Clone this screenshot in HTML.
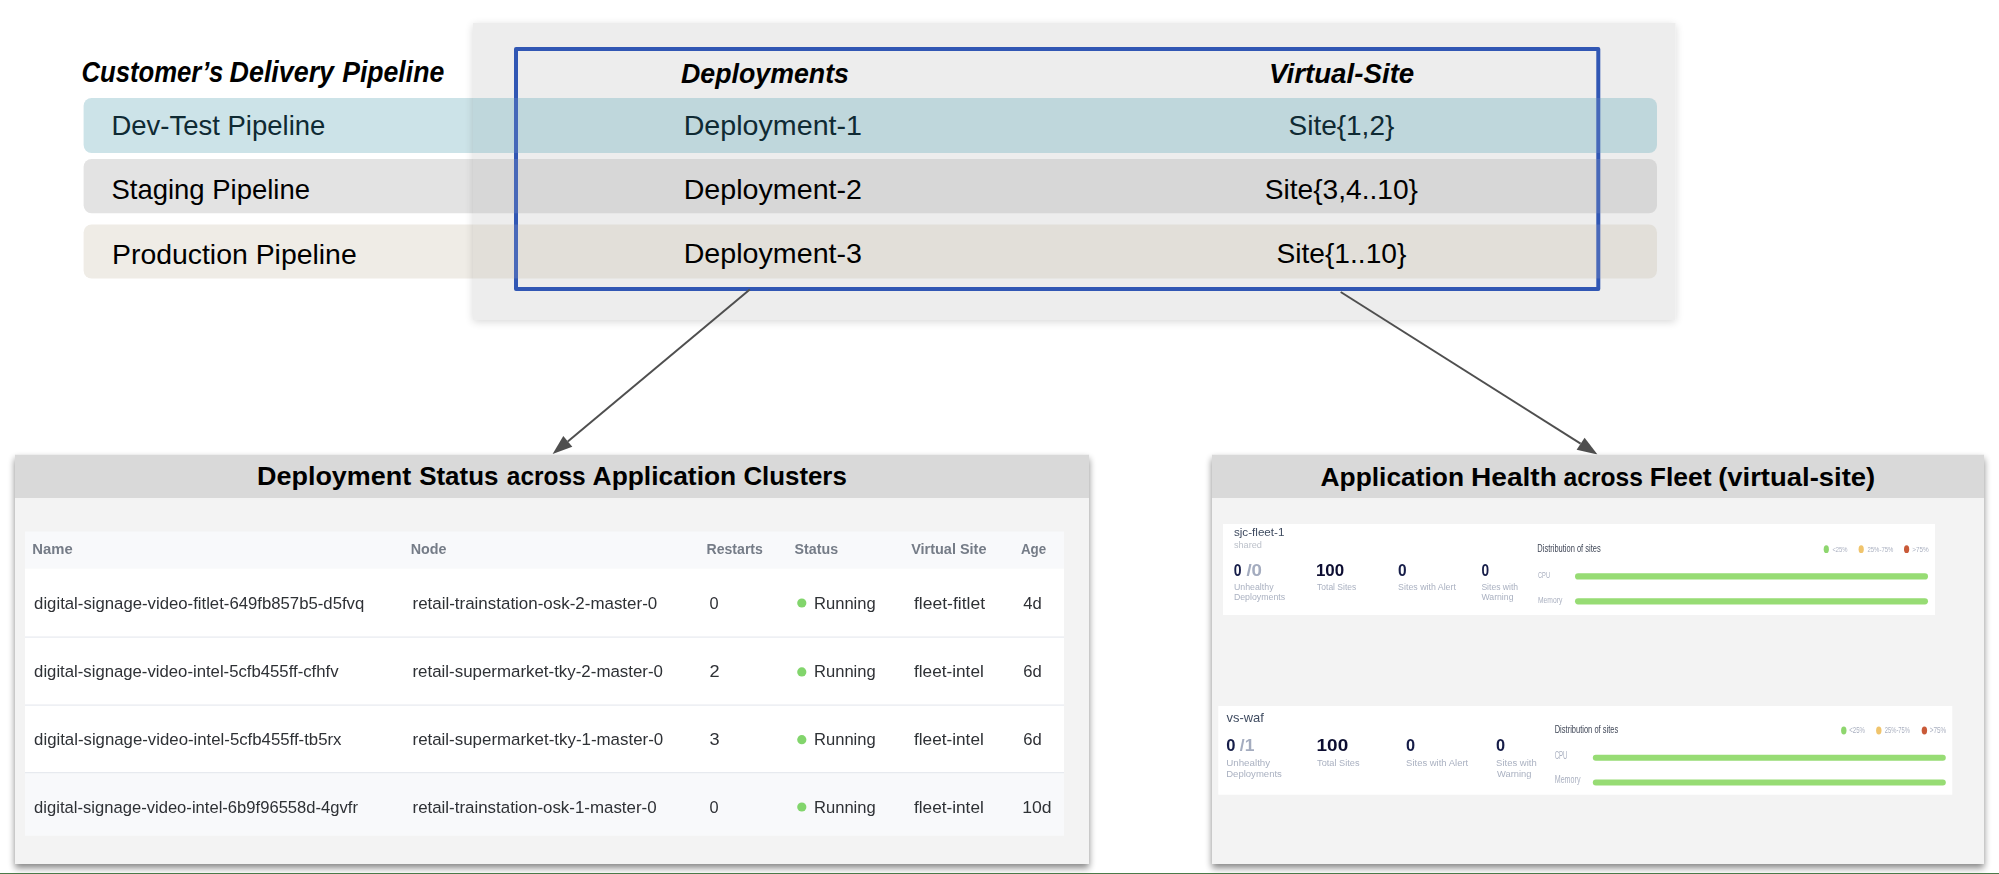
<!DOCTYPE html>
<html><head><meta charset="utf-8"><title>Delivery Pipeline</title>
<style>html,body{margin:0;padding:0;background:#fff;overflow:hidden}svg{display:block}</style></head>
<body><svg width="1999" height="874" viewBox="0 0 1999 874">
<rect width="1999" height="874" fill="#fff"/>
<defs><filter id="sh1" x="-5%" y="-10%" width="110%" height="125%"><feGaussianBlur in="SourceAlpha" stdDeviation="4"/><feOffset dx="0" dy="2"/><feComponentTransfer><feFuncA type="linear" slope="0.16"/></feComponentTransfer><feMerge><feMergeNode/><feMergeNode in="SourceGraphic"/></feMerge></filter><filter id="sh2" x="-5%" y="-5%" width="110%" height="115%"><feGaussianBlur in="SourceAlpha" stdDeviation="3.5"/><feOffset dx="0" dy="3.5"/><feComponentTransfer><feFuncA type="linear" slope="0.48"/></feComponentTransfer><feMerge><feMergeNode/><feMergeNode in="SourceGraphic"/></feMerge></filter><filter id="bl1" x="0" y="0" width="1999" height="874" filterUnits="userSpaceOnUse"><feGaussianBlur stdDeviation="0.3"/></filter><filter id="bl2" x="0" y="0" width="1999" height="874" filterUnits="userSpaceOnUse"><feGaussianBlur stdDeviation="0.5"/></filter></defs>
<rect x="83.6" y="98" width="1573.4" height="55" rx="8" fill="#cce3e8"/>
<rect x="83.6" y="159" width="1573.4" height="54.30000000000001" rx="8" fill="#e3e3e3"/>
<rect x="83.6" y="224.5" width="1573.4" height="54.0" rx="8" fill="#efece6"/>
<rect x="473" y="23" width="1202.5" height="296.8" fill="#ededed" filter="url(#sh1)"/>
<path d="M473 98 H1649 A8 8 0 0 1 1657 106 V145 A8 8 0 0 1 1649 153 H473 Z" fill="#bfd7dc"/>
<path d="M473 159 H1649 A8 8 0 0 1 1657 167 V205.3 A8 8 0 0 1 1649 213.3 H473 Z" fill="#d7d7d7"/>
<path d="M473 224.5 H1649 A8 8 0 0 1 1657 232.5 V270.5 A8 8 0 0 1 1649 278.5 H473 Z" fill="#e2dfd9"/>
<rect x="516" y="49" width="1082.3" height="240" fill="none" stroke="#3157b4" stroke-width="4" stroke-linejoin="round"/>
<rect x="512" y="98" width="8" height="55" fill="#bfd7dc" opacity="0.14"/>
<rect x="1594" y="98" width="8" height="55" fill="#bfd7dc" opacity="0.14"/>
<rect x="512" y="159" width="8" height="54.30000000000001" fill="#d7d7d7" opacity="0.14"/>
<rect x="1594" y="159" width="8" height="54.30000000000001" fill="#d7d7d7" opacity="0.14"/>
<rect x="512" y="224.5" width="8" height="54.0" fill="#e2dfd9" opacity="0.14"/>
<rect x="1594" y="224.5" width="8" height="54.0" fill="#e2dfd9" opacity="0.14"/>
<line x1="749.8" y1="289.5" x2="567.8" y2="441.4" stroke="#4f4f4f" stroke-width="2"/>
<polygon points="552.6,453.9 563.3,436 572.3,446.8" fill="#4f4f4f"/>
<line x1="1340.7" y1="292" x2="1580.6" y2="443.7" stroke="#4f4f4f" stroke-width="2"/>
<polygon points="1597.5,454.5 1576.6,449.7 1584.6,437.7" fill="#4f4f4f"/>
<rect x="15" y="454.7" width="1074" height="409.3" fill="#f3f3f3" filter="url(#sh2)"/>
<rect x="15" y="454.7" width="1074" height="43.3" fill="#d9d9d9"/>
<rect x="25" y="531.5" width="1039" height="37" fill="#f8f9fb"/>
<rect x="25" y="568.5" width="1039" height="204" fill="#ffffff"/>
<rect x="25" y="772.5" width="1039" height="63.2" fill="#f8f9fb"/>
<rect x="25" y="636.5" width="1039" height="1.2" fill="#e7eaef"/>
<rect x="25" y="704.5" width="1039" height="1.2" fill="#e7eaef"/>
<rect x="25" y="772.0" width="1039" height="1.2" fill="#e7eaef"/>
<circle cx="801.8" cy="603.0" r="4.6" fill="#82d56c"/>
<circle cx="801.8" cy="671.9" r="4.6" fill="#82d56c"/>
<circle cx="801.8" cy="739.7" r="4.6" fill="#82d56c"/>
<circle cx="801.8" cy="807.0" r="4.6" fill="#82d56c"/>
<rect x="1212" y="454.7" width="772" height="409.3" fill="#f3f3f3" filter="url(#sh2)"/>
<rect x="1212" y="454.7" width="772" height="43.3" fill="#d9d9d9"/>
<rect x="1223" y="524" width="712" height="91" fill="#ffffff"/>
<rect x="1575" y="573.3" width="353" height="6.2" rx="3.1" fill="#97dc74"/>
<rect x="1575" y="598.2" width="353" height="6.2" rx="3.1" fill="#97dc74"/>
<ellipse cx="1826.3" cy="549.2" rx="2.6" ry="3.9" fill="#8ed66e"/>
<ellipse cx="1861.2" cy="549.2" rx="2.6" ry="3.9" fill="#f0c46c"/>
<ellipse cx="1906.6" cy="549.2" rx="2.6" ry="3.9" fill="#c95a38"/>
<rect x="1218.3" y="706" width="734" height="88.7" fill="#ffffff"/>
<rect x="1592.8" y="754.7" width="353" height="6" rx="3" fill="#97dc74"/>
<rect x="1592.8" y="779.6" width="353" height="6" rx="3" fill="#97dc74"/>
<ellipse cx="1843.8" cy="730.4" rx="2.7" ry="4" fill="#8ed66e"/>
<ellipse cx="1878.8" cy="730.4" rx="2.7" ry="4" fill="#f0c46c"/>
<ellipse cx="1924.4" cy="730.4" rx="2.7" ry="4" fill="#c95a38"/>
<rect x="0" y="873" width="1999" height="1" fill="#4b7a49"/>
<text id="title0" x="81.40" y="82.2" textLength="141.80" lengthAdjust="spacingAndGlyphs" style="font-family:'Liberation Sans',sans-serif;font-size:29px;font-weight:bold;font-style:italic" fill="#000">Customer’s</text>
<text id="title1" x="229.60" y="82.2" textLength="104.40" lengthAdjust="spacingAndGlyphs" style="font-family:'Liberation Sans',sans-serif;font-size:29px;font-weight:bold;font-style:italic" fill="#000">Delivery</text>
<text id="title2" x="342.20" y="82.2" textLength="102.00" lengthAdjust="spacingAndGlyphs" style="font-family:'Liberation Sans',sans-serif;font-size:29px;font-weight:bold;font-style:italic" fill="#000">Pipeline</text>
<text id="hdep" x="681.00" y="82.9" textLength="168.00" lengthAdjust="spacingAndGlyphs" style="font-family:'Liberation Sans',sans-serif;font-size:28px;font-weight:bold;font-style:italic" fill="#000">Deployments</text>
<text id="hvs" x="1269.00" y="82.9" textLength="145.30" lengthAdjust="spacingAndGlyphs" style="font-family:'Liberation Sans',sans-serif;font-size:28px;font-weight:bold;font-style:italic" fill="#000">Virtual-Site</text>
<text id="p1" x="111.50" y="134.6" textLength="213.80" lengthAdjust="spacingAndGlyphs" style="font-family:'Liberation Sans',sans-serif;font-size:28.3px;font-weight:normal;font-style:normal" fill="#0f2a33">Dev-Test Pipeline</text>
<text id="p2" x="111.50" y="199.4" textLength="198.50" lengthAdjust="spacingAndGlyphs" style="font-family:'Liberation Sans',sans-serif;font-size:28.3px;font-weight:normal;font-style:normal" fill="#000">Staging Pipeline</text>
<text id="p3" x="112.00" y="263.6" textLength="244.70" lengthAdjust="spacingAndGlyphs" style="font-family:'Liberation Sans',sans-serif;font-size:28.3px;font-weight:normal;font-style:normal" fill="#000">Production Pipeline</text>
<text id="d1" x="683.70" y="134.7" textLength="178.30" lengthAdjust="spacingAndGlyphs" style="font-family:'Liberation Sans',sans-serif;font-size:28.3px;font-weight:normal;font-style:normal" fill="#0f2a33">Deployment-1</text>
<text id="d2" x="683.70" y="198.7" textLength="178.30" lengthAdjust="spacingAndGlyphs" style="font-family:'Liberation Sans',sans-serif;font-size:28.3px;font-weight:normal;font-style:normal" fill="#000">Deployment-2</text>
<text id="d3" x="683.70" y="263" textLength="178.30" lengthAdjust="spacingAndGlyphs" style="font-family:'Liberation Sans',sans-serif;font-size:28.3px;font-weight:normal;font-style:normal" fill="#000">Deployment-3</text>
<text id="s1" x="1288.50" y="134.7" textLength="105.80" lengthAdjust="spacingAndGlyphs" style="font-family:'Liberation Sans',sans-serif;font-size:28.3px;font-weight:normal;font-style:normal" fill="#0f2a33">Site{1,2}</text>
<text id="s2" x="1264.70" y="198.7" textLength="153.30" lengthAdjust="spacingAndGlyphs" style="font-family:'Liberation Sans',sans-serif;font-size:28.3px;font-weight:normal;font-style:normal" fill="#000">Site{3,4..10}</text>
<text id="s3" x="1276.40" y="263" textLength="130.00" lengthAdjust="spacingAndGlyphs" style="font-family:'Liberation Sans',sans-serif;font-size:28.3px;font-weight:normal;font-style:normal" fill="#000">Site{1..10}</text>
<text id="lt0" x="257.00" y="485.3" textLength="154.20" lengthAdjust="spacingAndGlyphs" style="font-family:'Liberation Sans',sans-serif;font-size:25.5px;font-weight:bold;font-style:normal" fill="#000">Deployment</text>
<text id="lt1" x="419.20" y="485.3" textLength="79.20" lengthAdjust="spacingAndGlyphs" style="font-family:'Liberation Sans',sans-serif;font-size:25.5px;font-weight:bold;font-style:normal" fill="#000">Status</text>
<text id="lt2" x="506.80" y="485.3" textLength="78.80" lengthAdjust="spacingAndGlyphs" style="font-family:'Liberation Sans',sans-serif;font-size:25.5px;font-weight:bold;font-style:normal" fill="#000">across</text>
<text id="lt3" x="592.60" y="485.3" textLength="143.60" lengthAdjust="spacingAndGlyphs" style="font-family:'Liberation Sans',sans-serif;font-size:25.5px;font-weight:bold;font-style:normal" fill="#000">Application</text>
<text id="lt4" x="743.40" y="485.3" textLength="103.40" lengthAdjust="spacingAndGlyphs" style="font-family:'Liberation Sans',sans-serif;font-size:25.5px;font-weight:bold;font-style:normal" fill="#000">Clusters</text>
<text id="rt0" x="1320.60" y="486.3" textLength="143.40" lengthAdjust="spacingAndGlyphs" style="font-family:'Liberation Sans',sans-serif;font-size:25.5px;font-weight:bold;font-style:normal" fill="#000">Application</text>
<text id="rt1" x="1471.00" y="486.3" textLength="85.80" lengthAdjust="spacingAndGlyphs" style="font-family:'Liberation Sans',sans-serif;font-size:25.5px;font-weight:bold;font-style:normal" fill="#000">Health</text>
<text id="rt2" x="1563.60" y="486.3" textLength="79.20" lengthAdjust="spacingAndGlyphs" style="font-family:'Liberation Sans',sans-serif;font-size:25.5px;font-weight:bold;font-style:normal" fill="#000">across</text>
<text id="rt3" x="1649.80" y="486.3" textLength="61.80" lengthAdjust="spacingAndGlyphs" style="font-family:'Liberation Sans',sans-serif;font-size:25.5px;font-weight:bold;font-style:normal" fill="#000">Fleet</text>
<text id="rt4" x="1718.20" y="486.3" textLength="157.00" lengthAdjust="spacingAndGlyphs" style="font-family:'Liberation Sans',sans-serif;font-size:25.5px;font-weight:bold;font-style:normal" fill="#000">(virtual-site)</text>
<g filter="url(#bl1)"><text id="h_name" x="32.35" y="554.1" textLength="40.35" lengthAdjust="spacingAndGlyphs" style="font-family:'Liberation Sans',sans-serif;font-size:14.2px;font-weight:bold;font-style:normal" fill="#757c87">Name</text>
<text id="h_node" x="410.70" y="554.1" textLength="35.80" lengthAdjust="spacingAndGlyphs" style="font-family:'Liberation Sans',sans-serif;font-size:14.2px;font-weight:bold;font-style:normal" fill="#757c87">Node</text>
<text id="h_rest" x="706.50" y="554.1" textLength="56.40" lengthAdjust="spacingAndGlyphs" style="font-family:'Liberation Sans',sans-serif;font-size:14.2px;font-weight:bold;font-style:normal" fill="#757c87">Restarts</text>
<text id="h_stat" x="794.60" y="554.1" textLength="43.50" lengthAdjust="spacingAndGlyphs" style="font-family:'Liberation Sans',sans-serif;font-size:14.2px;font-weight:bold;font-style:normal" fill="#757c87">Status</text>
<text id="h_vs" x="911.20" y="554.1" textLength="75.30" lengthAdjust="spacingAndGlyphs" style="font-family:'Liberation Sans',sans-serif;font-size:14.2px;font-weight:bold;font-style:normal" fill="#757c87">Virtual Site</text>
<text id="h_age" x="1020.90" y="554.1" textLength="25.30" lengthAdjust="spacingAndGlyphs" style="font-family:'Liberation Sans',sans-serif;font-size:14.2px;font-weight:bold;font-style:normal" fill="#757c87">Age</text>
<text id="r0_name" x="34.10" y="608.5" textLength="330.20" lengthAdjust="spacingAndGlyphs" style="font-family:'Liberation Sans',sans-serif;font-size:16.3px;font-weight:normal;font-style:normal" fill="#2e3035">digital-signage-video-fitlet-649fb857b5-d5fvq</text>
<text id="r0_node" x="412.50" y="608.5" textLength="244.70" lengthAdjust="spacingAndGlyphs" style="font-family:'Liberation Sans',sans-serif;font-size:16.3px;font-weight:normal;font-style:normal" fill="#2e3035">retail-trainstation-osk-2-master-0</text>
<text id="r0_rest" x="709.40" y="608.5" textLength="9.10" lengthAdjust="spacingAndGlyphs" style="font-family:'Liberation Sans',sans-serif;font-size:16.3px;font-weight:normal;font-style:normal" fill="#2e3035">0</text>
<text id="r0_run" x="814.00" y="608.5" textLength="61.70" lengthAdjust="spacingAndGlyphs" style="font-family:'Liberation Sans',sans-serif;font-size:16.3px;font-weight:normal;font-style:normal" fill="#2e3035">Running</text>
<text id="r0_vs" x="914.00" y="608.5" textLength="71.10" lengthAdjust="spacingAndGlyphs" style="font-family:'Liberation Sans',sans-serif;font-size:16.3px;font-weight:normal;font-style:normal" fill="#2e3035">fleet-fitlet</text>
<text id="r0_age" x="1023.20" y="608.5" textLength="18.50" lengthAdjust="spacingAndGlyphs" style="font-family:'Liberation Sans',sans-serif;font-size:16.3px;font-weight:normal;font-style:normal" fill="#2e3035">4d</text>
<text id="r1_name" x="34.10" y="677.4" textLength="304.40" lengthAdjust="spacingAndGlyphs" style="font-family:'Liberation Sans',sans-serif;font-size:16.3px;font-weight:normal;font-style:normal" fill="#2e3035">digital-signage-video-intel-5cfb455ff-cfhfv</text>
<text id="r1_node" x="412.50" y="677.4" textLength="250.50" lengthAdjust="spacingAndGlyphs" style="font-family:'Liberation Sans',sans-serif;font-size:16.3px;font-weight:normal;font-style:normal" fill="#2e3035">retail-supermarket-tky-2-master-0</text>
<text id="r1_rest" x="709.40" y="677.4" textLength="10.10" lengthAdjust="spacingAndGlyphs" style="font-family:'Liberation Sans',sans-serif;font-size:16.3px;font-weight:normal;font-style:normal" fill="#2e3035">2</text>
<text id="r1_run" x="814.00" y="677.4" textLength="61.70" lengthAdjust="spacingAndGlyphs" style="font-family:'Liberation Sans',sans-serif;font-size:16.3px;font-weight:normal;font-style:normal" fill="#2e3035">Running</text>
<text id="r1_vs" x="914.00" y="677.4" textLength="69.80" lengthAdjust="spacingAndGlyphs" style="font-family:'Liberation Sans',sans-serif;font-size:16.3px;font-weight:normal;font-style:normal" fill="#2e3035">fleet-intel</text>
<text id="r1_age" x="1023.20" y="677.4" textLength="18.50" lengthAdjust="spacingAndGlyphs" style="font-family:'Liberation Sans',sans-serif;font-size:16.3px;font-weight:normal;font-style:normal" fill="#2e3035">6d</text>
<text id="r2_name" x="34.10" y="745.2" textLength="307.40" lengthAdjust="spacingAndGlyphs" style="font-family:'Liberation Sans',sans-serif;font-size:16.3px;font-weight:normal;font-style:normal" fill="#2e3035">digital-signage-video-intel-5cfb455ff-tb5rx</text>
<text id="r2_node" x="412.50" y="745.2" textLength="250.70" lengthAdjust="spacingAndGlyphs" style="font-family:'Liberation Sans',sans-serif;font-size:16.3px;font-weight:normal;font-style:normal" fill="#2e3035">retail-supermarket-tky-1-master-0</text>
<text id="r2_rest" x="709.40" y="745.2" textLength="10.10" lengthAdjust="spacingAndGlyphs" style="font-family:'Liberation Sans',sans-serif;font-size:16.3px;font-weight:normal;font-style:normal" fill="#2e3035">3</text>
<text id="r2_run" x="814.00" y="745.2" textLength="61.70" lengthAdjust="spacingAndGlyphs" style="font-family:'Liberation Sans',sans-serif;font-size:16.3px;font-weight:normal;font-style:normal" fill="#2e3035">Running</text>
<text id="r2_vs" x="914.00" y="745.2" textLength="69.80" lengthAdjust="spacingAndGlyphs" style="font-family:'Liberation Sans',sans-serif;font-size:16.3px;font-weight:normal;font-style:normal" fill="#2e3035">fleet-intel</text>
<text id="r2_age" x="1023.20" y="745.2" textLength="18.50" lengthAdjust="spacingAndGlyphs" style="font-family:'Liberation Sans',sans-serif;font-size:16.3px;font-weight:normal;font-style:normal" fill="#2e3035">6d</text>
<text id="r3_name" x="34.10" y="812.5" textLength="323.90" lengthAdjust="spacingAndGlyphs" style="font-family:'Liberation Sans',sans-serif;font-size:16.3px;font-weight:normal;font-style:normal" fill="#2e3035">digital-signage-video-intel-6b9f96558d-4gvfr</text>
<text id="r3_node" x="412.50" y="812.5" textLength="244.10" lengthAdjust="spacingAndGlyphs" style="font-family:'Liberation Sans',sans-serif;font-size:16.3px;font-weight:normal;font-style:normal" fill="#2e3035">retail-trainstation-osk-1-master-0</text>
<text id="r3_rest" x="709.40" y="812.5" textLength="9.10" lengthAdjust="spacingAndGlyphs" style="font-family:'Liberation Sans',sans-serif;font-size:16.3px;font-weight:normal;font-style:normal" fill="#2e3035">0</text>
<text id="r3_run" x="814.00" y="812.5" textLength="61.70" lengthAdjust="spacingAndGlyphs" style="font-family:'Liberation Sans',sans-serif;font-size:16.3px;font-weight:normal;font-style:normal" fill="#2e3035">Running</text>
<text id="r3_vs" x="914.00" y="812.5" textLength="69.80" lengthAdjust="spacingAndGlyphs" style="font-family:'Liberation Sans',sans-serif;font-size:16.3px;font-weight:normal;font-style:normal" fill="#2e3035">fleet-intel</text>
<text id="r3_age" x="1022.20" y="812.5" textLength="29.40" lengthAdjust="spacingAndGlyphs" style="font-family:'Liberation Sans',sans-serif;font-size:16.3px;font-weight:normal;font-style:normal" fill="#2e3035">10d</text></g>
<g filter="url(#bl2)"><text id="c1_name" x="1233.90" y="536" textLength="50.60" lengthAdjust="spacingAndGlyphs" style="font-family:'Liberation Sans',sans-serif;font-size:11.5px;font-weight:normal;font-style:normal" fill="#3f4b60">sjc-fleet-1</text>
<text id="c1_shared" x="1233.90" y="548.3" textLength="28.10" lengthAdjust="spacingAndGlyphs" style="font-family:'Liberation Sans',sans-serif;font-size:9.5px;font-weight:normal;font-style:normal" fill="#bcc1ca">shared</text>
<text id="c1_n0" x="1233.70" y="576.1" textLength="7.80" lengthAdjust="spacingAndGlyphs" style="font-family:'Liberation Sans',sans-serif;font-size:16.2px;font-weight:bold;font-style:normal" fill="#151d48">0</text>
<text id="c1_n0b" x="1246.40" y="576.1" textLength="15.60" lengthAdjust="spacingAndGlyphs" style="font-family:'Liberation Sans',sans-serif;font-size:16.2px;font-weight:bold;font-style:normal" fill="#a4acbf">/0</text>
<text id="c1_100" x="1315.90" y="576.3" textLength="28.20" lengthAdjust="spacingAndGlyphs" style="font-family:'Liberation Sans',sans-serif;font-size:16.2px;font-weight:bold;font-style:normal" fill="#0b1030">100</text>
<text id="c1_u1" x="1233.90" y="589.5" textLength="39.70" lengthAdjust="spacingAndGlyphs" style="font-family:'Liberation Sans',sans-serif;font-size:8.7px;font-weight:normal;font-style:normal" fill="#aab1c1">Unhealthy</text>
<text id="c1_u2" x="1233.90" y="599.8" textLength="51.20" lengthAdjust="spacingAndGlyphs" style="font-family:'Liberation Sans',sans-serif;font-size:8.7px;font-weight:normal;font-style:normal" fill="#aab1c1">Deployments</text>
<text id="c1_ts" x="1317.10" y="589.5" textLength="39.10" lengthAdjust="spacingAndGlyphs" style="font-family:'Liberation Sans',sans-serif;font-size:8.7px;font-weight:normal;font-style:normal" fill="#aab1c1">Total Sites</text>
<text id="c1_a0" x="1398.10" y="575.8" textLength="8.60" lengthAdjust="spacingAndGlyphs" style="font-family:'Liberation Sans',sans-serif;font-size:16.2px;font-weight:bold;font-style:normal" fill="#151d48">0</text>
<text id="c1_al" x="1398.10" y="589.6" textLength="57.80" lengthAdjust="spacingAndGlyphs" style="font-family:'Liberation Sans',sans-serif;font-size:8.7px;font-weight:normal;font-style:normal" fill="#aab1c1">Sites with Alert</text>
<text id="c1_w0" x="1481.40" y="575.8" textLength="7.60" lengthAdjust="spacingAndGlyphs" style="font-family:'Liberation Sans',sans-serif;font-size:16.2px;font-weight:bold;font-style:normal" fill="#151d48">0</text>
<text id="c1_w1" x="1481.40" y="589.6" textLength="36.70" lengthAdjust="spacingAndGlyphs" style="font-family:'Liberation Sans',sans-serif;font-size:8.7px;font-weight:normal;font-style:normal" fill="#aab1c1">Sites with</text>
<text id="c1_w2" x="1481.40" y="600" textLength="32.10" lengthAdjust="spacingAndGlyphs" style="font-family:'Liberation Sans',sans-serif;font-size:8.7px;font-weight:normal;font-style:normal" fill="#aab1c1">Warning</text>
<text id="c1_dist" x="1537.30" y="551.6" textLength="63.40" lengthAdjust="spacingAndGlyphs" style="font-family:'Liberation Sans',sans-serif;font-size:10px;font-weight:normal;font-style:normal" fill="#3f4656">Distribution of sites</text>
<text id="c1_cpu" x="1538.00" y="577.9" textLength="12.00" lengthAdjust="spacingAndGlyphs" style="font-family:'Liberation Sans',sans-serif;font-size:9.5px;font-weight:normal;font-style:normal" fill="#aab0c0">CPU</text>
<text id="c1_mem" x="1538.00" y="602.6" textLength="24.30" lengthAdjust="spacingAndGlyphs" style="font-family:'Liberation Sans',sans-serif;font-size:9.5px;font-weight:normal;font-style:normal" fill="#aab0c0">Memory</text>
<text id="c1_lg1" x="1832.40" y="551.5" textLength="15.10" lengthAdjust="spacingAndGlyphs" style="font-family:'Liberation Sans',sans-serif;font-size:8px;font-weight:normal;font-style:normal" fill="#aab0c0">&lt;25%</text>
<text id="c1_lg2" x="1867.50" y="551.5" textLength="25.80" lengthAdjust="spacingAndGlyphs" style="font-family:'Liberation Sans',sans-serif;font-size:8px;font-weight:normal;font-style:normal" fill="#aab0c0">25%-75%</text>
<text id="c1_lg3" x="1912.30" y="551.5" textLength="16.50" lengthAdjust="spacingAndGlyphs" style="font-family:'Liberation Sans',sans-serif;font-size:8px;font-weight:normal;font-style:normal" fill="#aab0c0">&gt;75%</text>
<text id="c2_name" x="1226.50" y="721.8" textLength="37.30" lengthAdjust="spacingAndGlyphs" style="font-family:'Liberation Sans',sans-serif;font-size:12.2px;font-weight:normal;font-style:normal" fill="#3f4b60">vs-waf</text>
<text id="c2_n0" x="1226.20" y="751" textLength="9.20" lengthAdjust="spacingAndGlyphs" style="font-family:'Liberation Sans',sans-serif;font-size:17.2px;font-weight:bold;font-style:normal" fill="#151d48">0</text>
<text id="c2_n0b" x="1239.80" y="751" textLength="14.60" lengthAdjust="spacingAndGlyphs" style="font-family:'Liberation Sans',sans-serif;font-size:17.2px;font-weight:bold;font-style:normal" fill="#a4acbf">/1</text>
<text id="c2_100" x="1316.60" y="751" textLength="31.60" lengthAdjust="spacingAndGlyphs" style="font-family:'Liberation Sans',sans-serif;font-size:17.2px;font-weight:bold;font-style:normal" fill="#0b1030">100</text>
<text id="c2_u1" x="1226.20" y="765.9" textLength="44.00" lengthAdjust="spacingAndGlyphs" style="font-family:'Liberation Sans',sans-serif;font-size:9.2px;font-weight:normal;font-style:normal" fill="#aab1c1">Unhealthy</text>
<text id="c2_u2" x="1226.20" y="777.2" textLength="55.70" lengthAdjust="spacingAndGlyphs" style="font-family:'Liberation Sans',sans-serif;font-size:9.2px;font-weight:normal;font-style:normal" fill="#aab1c1">Deployments</text>
<text id="c2_ts" x="1317.10" y="765.9" textLength="42.40" lengthAdjust="spacingAndGlyphs" style="font-family:'Liberation Sans',sans-serif;font-size:9.2px;font-weight:normal;font-style:normal" fill="#aab1c1">Total Sites</text>
<text id="c2_a0" x="1406.10" y="750.6" textLength="9.10" lengthAdjust="spacingAndGlyphs" style="font-family:'Liberation Sans',sans-serif;font-size:17.2px;font-weight:bold;font-style:normal" fill="#151d48">0</text>
<text id="c2_al" x="1406.10" y="766.3" textLength="62.10" lengthAdjust="spacingAndGlyphs" style="font-family:'Liberation Sans',sans-serif;font-size:9.2px;font-weight:normal;font-style:normal" fill="#aab1c1">Sites with Alert</text>
<text id="c2_w0" x="1496.10" y="750.6" textLength="9.10" lengthAdjust="spacingAndGlyphs" style="font-family:'Liberation Sans',sans-serif;font-size:17.2px;font-weight:bold;font-style:normal" fill="#151d48">0</text>
<text id="c2_w1" x="1496.10" y="766.3" textLength="40.60" lengthAdjust="spacingAndGlyphs" style="font-family:'Liberation Sans',sans-serif;font-size:9.2px;font-weight:normal;font-style:normal" fill="#aab1c1">Sites with</text>
<text id="c2_w2" x="1497.10" y="776.9" textLength="34.40" lengthAdjust="spacingAndGlyphs" style="font-family:'Liberation Sans',sans-serif;font-size:9.2px;font-weight:normal;font-style:normal" fill="#aab1c1">Warning</text>
<text id="c2_dist" x="1554.70" y="732.8" textLength="63.50" lengthAdjust="spacingAndGlyphs" style="font-family:'Liberation Sans',sans-serif;font-size:10.5px;font-weight:normal;font-style:normal" fill="#3f4656">Distribution of sites</text>
<text id="c2_cpu" x="1554.70" y="758.8" textLength="12.80" lengthAdjust="spacingAndGlyphs" style="font-family:'Liberation Sans',sans-serif;font-size:10px;font-weight:normal;font-style:normal" fill="#aab0c0">CPU</text>
<text id="c2_mem" x="1554.70" y="783" textLength="25.80" lengthAdjust="spacingAndGlyphs" style="font-family:'Liberation Sans',sans-serif;font-size:10px;font-weight:normal;font-style:normal" fill="#aab0c0">Memory</text>
<text id="c2_lg1" x="1849.20" y="732.5" textLength="15.80" lengthAdjust="spacingAndGlyphs" style="font-family:'Liberation Sans',sans-serif;font-size:8.3px;font-weight:normal;font-style:normal" fill="#aab0c0">&lt;25%</text>
<text id="c2_lg2" x="1884.80" y="732.5" textLength="25.20" lengthAdjust="spacingAndGlyphs" style="font-family:'Liberation Sans',sans-serif;font-size:8.3px;font-weight:normal;font-style:normal" fill="#aab0c0">25%-75%</text>
<text id="c2_lg3" x="1929.70" y="732.5" textLength="16.60" lengthAdjust="spacingAndGlyphs" style="font-family:'Liberation Sans',sans-serif;font-size:8.3px;font-weight:normal;font-style:normal" fill="#aab0c0">&gt;75%</text></g>
</svg></body></html>
